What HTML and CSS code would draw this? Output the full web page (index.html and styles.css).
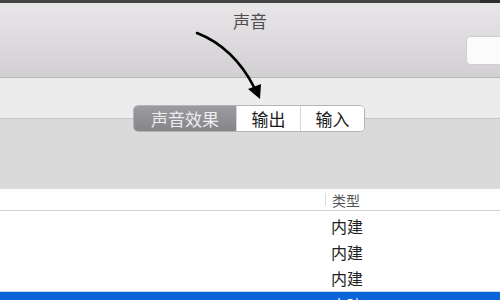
FILE: index.html
```html
<!DOCTYPE html>
<html lang="zh">
<head>
<meta charset="utf-8">
<link rel="stylesheet" href="styles.css">
</head>
<body>
<div class="window">
  <div class="topbar"><div class="topbar-right"></div></div>
  <div class="titlebar">
    <div class="title">声音</div>
    <div class="search"></div>
  </div>
  <div class="toolbar"></div>
  <div class="tabbox">
    <div class="segmented">
      <div class="seg seg-selected seg-1">声音效果</div>
      <div class="seg seg-2">输出</div>
      <div class="seg seg-3">输入</div>
    </div>
  </div>
  <div class="table">
    <div class="thead">
      <div class="col-name"></div>
      <div class="col-type"><span class="divider"></span>类型</div>
    </div>
    <div class="tbody">
      <div class="row"><div class="col-name"></div><div class="col-type">内建</div></div>
      <div class="row"><div class="col-name"></div><div class="col-type">内建</div></div>
      <div class="row"><div class="col-name"></div><div class="col-type">内建</div></div>
      <div class="row row-selected"><div class="col-name"></div><div class="col-type">内建</div></div>
    </div>
  </div>
  <svg class="arrow" width="500" height="300" viewBox="0 0 500 300">
    <path d="M197,33 C220,42 240,60 254,87" fill="none" stroke="#000" stroke-width="2.6" stroke-linecap="round"/>
    <polygon points="260,99 248,89 261,84" fill="#000"/>
  </svg>
</div>
</body>
</html>
```
FILE: styles.css
```css
* { box-sizing: border-box; }
html, body {
  margin: 0;
  padding: 0;
  width: 500px;
  height: 300px;
  overflow: hidden;
  font-family: "Noto Sans CJK SC", "Noto Sans", sans-serif;
}
.window {
  position: relative;
  width: 500px;
  height: 300px;
  background: #ececec;
}
.topbar {
  height: 3px;
  background: #444444;
  display: flex;
  justify-content: flex-end;
}
.topbar-right {
  width: 20px;
  background: #2c2c2c;
}
.titlebar {
  position: relative;
  height: 75px;
  background: linear-gradient(#e8e6e8, #d3d0d3);
  border-bottom: 1px solid #b9b7b9;
  display: flex;
  justify-content: center;
}
.title {
  margin-top: 7px;
  font-size: 17px;
  line-height: 22px;
  color: #4e4e4e;
}
.search {
  position: absolute;
  left: 466px;
  top: 33px;
  width: 50px;
  height: 29px;
  background: #fbfbfb;
  border: 1px solid #cfcdcf;
  border-radius: 5px;
}
.toolbar {
  height: 40px;
  background: #ececec;
}
.tabbox {
  height: 71px;
  background: #dadada;
  border-top: 1px solid #c6c6c6;
}
.segmented {
  display: flex;
  margin-top: -14px;
  margin-left: 133px;
  width: 232px;
  height: 27px;
  border: 1px solid #b4b4b4;
  border-radius: 5px;
  overflow: hidden;
  background: #ffffff;
}
.seg {
  display: flex;
  align-items: center;
  justify-content: center;
  font-size: 17px;
  color: #1a1a1a;
  background: #ffffff;
}
.seg-1 { width: 102px; }
.seg-2 { width: 64px; border-left: 1px solid #d6d6d6; }
.seg-3 { flex: 1; border-left: 1px solid #d6d6d6; }
.seg-selected {
  background: linear-gradient(#9c9ca0, #86868a);
  color: #ededed;
}
.table {
  background: #ffffff;
  height: 111px;
}
.thead {
  display: flex;
  height: 22px;
  border-bottom: 1px solid #d2d2d2;
}
.col-name { width: 325px; }
.col-type {
  display: flex;
  align-items: center;
  flex: 1;
}
.thead .col-type {
  font-size: 14px;
  color: #555555;
}
.divider {
  width: 1px;
  height: 13px;
  background: #dcdcdc;
  margin-right: 6px;
}
.tbody {
  padding-top: 2px;
}
.row {
  display: flex;
  height: 26px;
}
.row .col-type {
  padding-left: 6px;
  font-size: 16px;
  color: #222222;
}
.row-selected {
  background: #0b65d8;
  border-top: 1px solid #c9d9ef;
  color: #ffffff;
}
.row-selected .col-type { color: #ffffff; }
.arrow {
  position: absolute;
  left: 0;
  top: 0;
  pointer-events: none;
}
```
